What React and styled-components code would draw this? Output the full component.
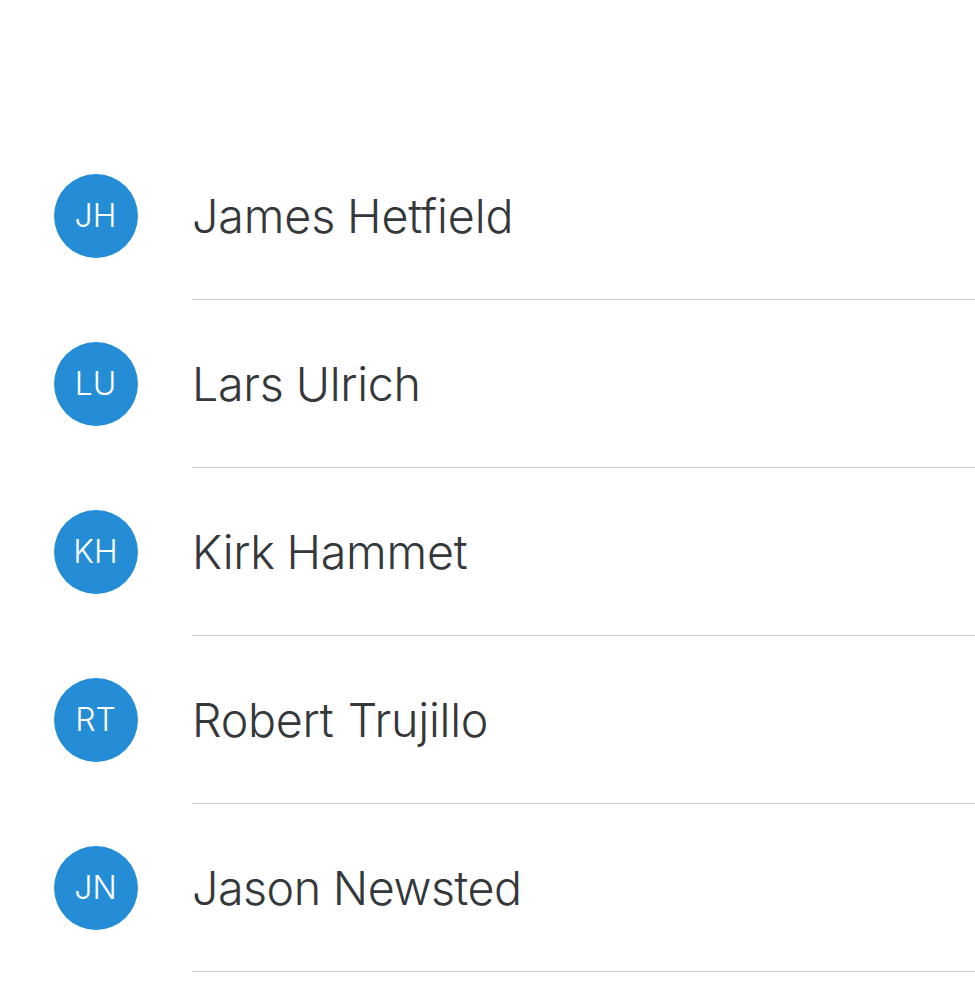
import React from "react";
import styled, { createGlobalStyle } from "styled-components";

const GlobalStyle = createGlobalStyle`
  * { box-sizing: border-box; }
  body { margin: 0; background: #fff; }
`;

const List = styled.ul`
  height: 1008px;
  margin: 0;
  padding: 132px 0 0 54px;
  list-style: none;
  overflow: hidden;
  font-family: Inter, "Liberation Sans", sans-serif;
  font-weight: 300;
  -webkit-font-smoothing: antialiased;
`;

const Row = styled.li`
  display: flex;
  align-items: center;
  gap: 54px;
  height: 168px;
`;

const Avatar = styled.span`
  display: flex;
  flex: none;
  align-items: center;
  justify-content: center;
  width: 84px;
  height: 84px;
  padding-right: 1px;
  border-radius: 50%;
  background: #248dd6;
  color: #fff;
  font-size: 32px;
  line-height: 40px;
  white-space: nowrap;
`;

const Body = styled.div`
  display: flex;
  flex: 1;
  align-items: center;
  height: 168px;
  border-bottom: 1px solid #c8c9cb;
`;

const Name = styled.span`
  display: inline-block;
  color: #34383b;
  font-size: 46.6px;
  line-height: 60px;
  letter-spacing: ${({ $tracking }) => $tracking}px;
  word-spacing: ${({ $gap }) => $gap}px;
  white-space: nowrap;
`;

const members = [
  { initials: "JH", name: "James Hetfield", tracking: -0.12, gap: -1 },
  { initials: "LU", name: "Lars Ulrich", tracking: -0.3, gap: -0.5 },
  { initials: "KH", name: "Kirk Hammet", tracking: -0.24, gap: -1 },
  { initials: "RT", name: "Robert Trujillo", tracking: -0.25, gap: 1.5 },
  { initials: "JN", name: "Jason Newsted", tracking: -0.48, gap: -0.5 },
];

export default function App() {
  return (
    <>
      <GlobalStyle />
      <List>
        {members.map((m) => (
          <Row key={m.name}>
            <Avatar>{m.initials}</Avatar>
            <Body>
              <Name $tracking={m.tracking} $gap={m.gap}>
                {m.name}
              </Name>
            </Body>
          </Row>
        ))}
      </List>
    </>
  );
}
